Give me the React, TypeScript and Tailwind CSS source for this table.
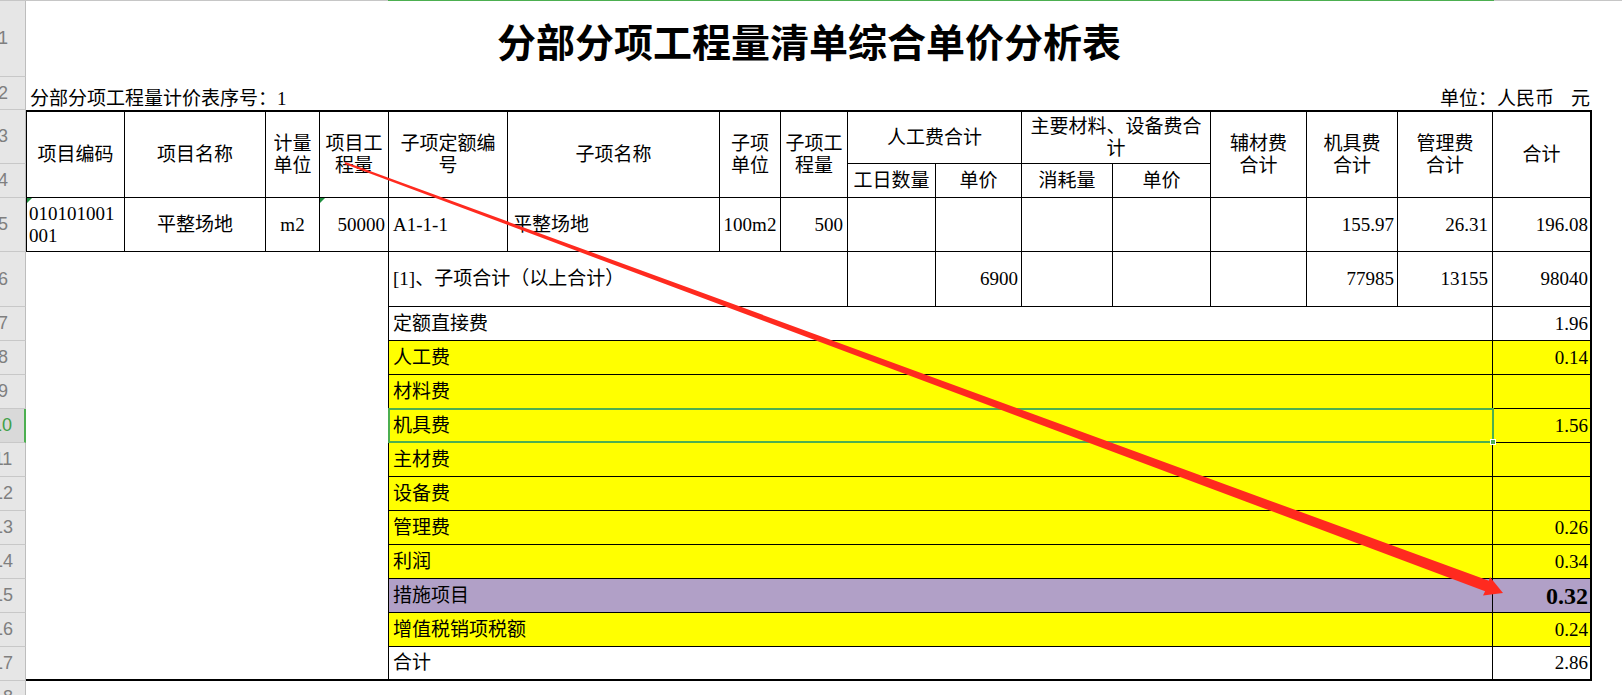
import React from "react";

type P = { c: string; children?: React.ReactNode };

function Cell({ c, children }: P) {
  return <div className={`flex items-center border-black leading-[22px] whitespace-nowrap ${c}`}>{children}</div>;
}

function Tri() {
  return (
    <div className="absolute left-0 top-0 h-0 w-0 border-t-[5px] border-r-[5px] border-t-[#1f8f3f] border-r-transparent" />
  );
}

const rowHeads: { n: number; c: string }[] = [
  { n: 1, c: "row-start-1" },
  { n: 2, c: "row-start-2" },
  { n: 3, c: "row-start-3" },
  { n: 4, c: "row-start-4" },
  { n: 5, c: "row-start-5" },
  { n: 6, c: "row-start-6" },
  { n: 7, c: "row-start-7" },
  { n: 8, c: "row-start-8" },
  { n: 9, c: "row-start-9" },
  { n: 10, c: "row-start-10" },
  { n: 11, c: "row-start-11" },
  { n: 12, c: "row-start-12" },
  { n: 13, c: "row-start-13" },
  { n: 14, c: "row-start-14" },
  { n: 15, c: "row-start-15" },
  { n: 16, c: "row-start-16" },
  { n: 17, c: "row-start-17" },
  { n: 18, c: "row-start-18" },
];

const lower: { label: string; value: string; lc: string; vc: string }[] = [
  { label: "定额直接费", value: "1.96", lc: "row-start-7 bg-white", vc: "row-start-7 bg-white" },
  { label: "人工费", value: "0.14", lc: "row-start-8 bg-[#ffff00]", vc: "row-start-8 bg-[#ffff00]" },
  { label: "材料费", value: "", lc: "row-start-9 bg-[#ffff00]", vc: "row-start-9 bg-[#ffff00]" },
  { label: "机具费", value: "1.56", lc: "row-start-10 bg-[#ffff00] relative", vc: "row-start-10 bg-[#ffff00]" },
  { label: "主材费", value: "", lc: "row-start-11 bg-[#ffff00]", vc: "row-start-11 bg-[#ffff00]" },
  { label: "设备费", value: "", lc: "row-start-12 bg-[#ffff00]", vc: "row-start-12 bg-[#ffff00]" },
  { label: "管理费", value: "0.26", lc: "row-start-13 bg-[#ffff00]", vc: "row-start-13 bg-[#ffff00]" },
  { label: "利润", value: "0.34", lc: "row-start-14 bg-[#ffff00]", vc: "row-start-14 bg-[#ffff00]" },
  { label: "措施项目", value: "0.32", lc: "row-start-15 bg-[#b1a0c7]", vc: "row-start-15 bg-[#b1a0c7] text-[24px] font-bold" },
  { label: "增值税销项税额", value: "0.24", lc: "row-start-16 bg-[#ffff00]", vc: "row-start-16 bg-[#ffff00]" },
];

export default function App() {
  return (
    <div className="relative h-[695px] w-[1622px] overflow-hidden bg-white text-black font-['Liberation_Serif','Noto_Sans_CJK_SC',serif] text-[19px]">
      <div className="flex h-px">
        <div className="w-[388px] bg-[#c6c6c6]" />
        <div className="w-[1106px] bg-[#4caf50]" />
        <div className="flex-1 bg-[#c6c6c6]" />
      </div>
      <div className="grid grid-cols-[26px_99px_141px_54px_69px_119px_212px_61px_67px_88px_86px_91px_98px_96px_91px_95px_99px_1fr] grid-rows-[76px_33px_54px_34px_54px_55px_repeat(11,34px)_34px]">
        {rowHeads.map((r) => (
          <div
            key={r.n}
            className={`col-start-1 flex items-center justify-end overflow-hidden border-b border-[#c8c8c8] font-['Liberation_Sans',sans-serif] text-[18px] ${
              r.n === 10
                ? "border-r-2 border-r-[#4caf50] bg-[#d9d9d9] text-[#3fa046]"
                : "border-r border-r-[#bdbdbd] bg-[#e6e6e6] text-[#7f7f7f]"
            } ${r.c}`}
          >
            <span className="w-[44px] shrink-0 text-center">{r.n}</span>
          </div>
        ))}

        {/* Row 1 title */}
        <div className="col-start-2 col-span-16 row-start-1 flex items-center justify-center pt-[2px] font-['Noto_Sans_CJK_SC',sans-serif] text-[39px] font-bold">
          分部分项工程量清单综合单价分析表
        </div>

        {/* Row 2 */}
        <div className="col-start-2 col-span-16 row-start-2 flex items-end justify-between pl-[4px] pr-[2px] leading-[22px]">
          <span>分部分项工程量计价表序号：1</span>
          <span>
            <span>单位：人民币</span>
            <span className="ml-[17px]">元</span>
          </span>
        </div>

        {/* Rows 3-4 header */}
        <Cell c="col-start-2 row-start-3 row-span-2 border-l border-t-2 border-r border-b justify-center text-center">项目编码</Cell>
        <Cell c="col-start-3 row-start-3 row-span-2 border-t-2 border-r border-b justify-center text-center">项目名称</Cell>
        <Cell c="col-start-4 row-start-3 row-span-2 border-t-2 border-r border-b justify-center text-center">
          计量<br />单位
        </Cell>
        <Cell c="col-start-5 row-start-3 row-span-2 border-t-2 border-r border-b justify-center text-center">
          项目工<br />程量
        </Cell>
        <Cell c="col-start-6 row-start-3 row-span-2 border-t-2 border-r border-b justify-center text-center">
          子项定额编<br />号
        </Cell>
        <Cell c="col-start-7 row-start-3 row-span-2 border-t-2 border-r border-b justify-center text-center">子项名称</Cell>
        <Cell c="col-start-8 row-start-3 row-span-2 border-t-2 border-r border-b justify-center text-center">
          子项<br />单位
        </Cell>
        <Cell c="col-start-9 row-start-3 row-span-2 border-t-2 border-r border-b justify-center text-center">
          子项工<br />程量
        </Cell>
        <Cell c="col-start-10 col-span-2 row-start-3 border-t-2 border-r border-b justify-center text-center">人工费合计</Cell>
        <Cell c="col-start-12 col-span-2 row-start-3 border-t-2 border-r border-b justify-center text-center">
          主要材料、设备费合<br />计
        </Cell>
        <Cell c="col-start-14 row-start-3 row-span-2 border-t-2 border-r border-b justify-center text-center">
          辅材费<br />合计
        </Cell>
        <Cell c="col-start-15 row-start-3 row-span-2 border-t-2 border-r border-b justify-center text-center">
          机具费<br />合计
        </Cell>
        <Cell c="col-start-16 row-start-3 row-span-2 border-t-2 border-r border-b justify-center text-center">
          管理费<br />合计
        </Cell>
        <Cell c="col-start-17 row-start-3 row-span-2 border-t-2 border-r-2 border-b justify-center text-center">合计</Cell>
        <Cell c="col-start-10 row-start-4 border-r border-b justify-center">工日数量</Cell>
        <Cell c="col-start-11 row-start-4 border-r border-b justify-center">单价</Cell>
        <Cell c="col-start-12 row-start-4 border-r border-b justify-center">消耗量</Cell>
        <Cell c="col-start-13 row-start-4 border-r border-b justify-center">单价</Cell>

        {/* Row 5 */}
        <Cell c="col-start-2 row-start-5 relative border-l border-r border-b pl-[2px]">
          <Tri />
          <span>
            010101001<br />001
          </span>
        </Cell>
        <Cell c="col-start-3 row-start-5 border-r border-b justify-center">平整场地</Cell>
        <Cell c="col-start-4 row-start-5 border-r border-b justify-center">m2</Cell>
        <Cell c="col-start-5 row-start-5 relative border-r border-b justify-end pr-[3px]">
          <Tri />
          50000
        </Cell>
        <Cell c="col-start-6 row-start-5 border-r border-b pl-[4px]">A1-1-1</Cell>
        <Cell c="col-start-7 row-start-5 border-r border-b pl-[5px]">平整场地</Cell>
        <Cell c="col-start-8 row-start-5 border-r border-b justify-center">100m2</Cell>
        <Cell c="col-start-9 row-start-5 border-r border-b justify-end pr-[4px]">500</Cell>
        <Cell c="col-start-10 row-start-5 border-r border-b" />
        <Cell c="col-start-11 row-start-5 border-r border-b" />
        <Cell c="col-start-12 row-start-5 border-r border-b" />
        <Cell c="col-start-13 row-start-5 border-r border-b" />
        <Cell c="col-start-14 row-start-5 border-r border-b" />
        <Cell c="col-start-15 row-start-5 border-r border-b justify-end pr-[3px]">155.97</Cell>
        <Cell c="col-start-16 row-start-5 border-r border-b justify-end pr-[4px]">26.31</Cell>
        <Cell c="col-start-17 row-start-5 border-r-2 border-b justify-end pr-[2px]">196.08</Cell>

        {/* Row 6 */}
        <Cell c="col-start-2 col-span-4 row-start-6 row-span-12 border-r border-b-2" />
        <Cell c="col-start-6 col-span-4 row-start-6 border-r border-b pl-[4px]">[1]、子项合计（以上合计）</Cell>
        <Cell c="col-start-10 row-start-6 border-r border-b" />
        <Cell c="col-start-11 row-start-6 border-r border-b justify-end pr-[3px]">6900</Cell>
        <Cell c="col-start-12 row-start-6 border-r border-b" />
        <Cell c="col-start-13 row-start-6 border-r border-b" />
        <Cell c="col-start-14 row-start-6 border-r border-b" />
        <Cell c="col-start-15 row-start-6 border-r border-b justify-end pr-[3px]">77985</Cell>
        <Cell c="col-start-16 row-start-6 border-r border-b justify-end pr-[4px]">13155</Cell>
        <Cell c="col-start-17 row-start-6 border-r-2 border-b justify-end pr-[2px]">98040</Cell>

        {/* Rows 7-16 */}
        {lower.map((r) => (
          <React.Fragment key={r.label}>
            <Cell c={`col-start-6 col-span-11 border-r border-b pl-[4px] ${r.lc}`}>
              {r.label}
              {r.label === "机具费" && (
                <div className="absolute -left-[1px] -top-[1px] -right-[2px] -bottom-[1px] border-2 border-[#4caf50]">
                  <div className="absolute -right-[4px] -bottom-[4px] h-[6px] w-[6px] border border-white bg-[#4caf50]" />
                </div>
              )}
            </Cell>
            <Cell c={`col-start-17 border-r-2 border-b justify-end pr-[2px] ${r.vc}`}>{r.value}</Cell>
          </React.Fragment>
        ))}

        {/* Row 17 */}
        <Cell c="col-start-6 col-span-11 row-start-17 border-r border-b-2 pl-[4px]">合计</Cell>
        <Cell c="col-start-17 row-start-17 border-r-2 border-b-2 justify-end pr-[2px]">2.86</Cell>
      </div>

      <svg className="pointer-events-none absolute left-0 top-0" width="1622" height="695" viewBox="0 0 1622 695">
        <polygon
          points="345.4,162.1 1488.9,580.8 1490,577 1503,593 1483,595.5 1485.1,591.2 344.6,163.9"
          fill="#ff2a1f"
        />
      </svg>
    </div>
  );
}
